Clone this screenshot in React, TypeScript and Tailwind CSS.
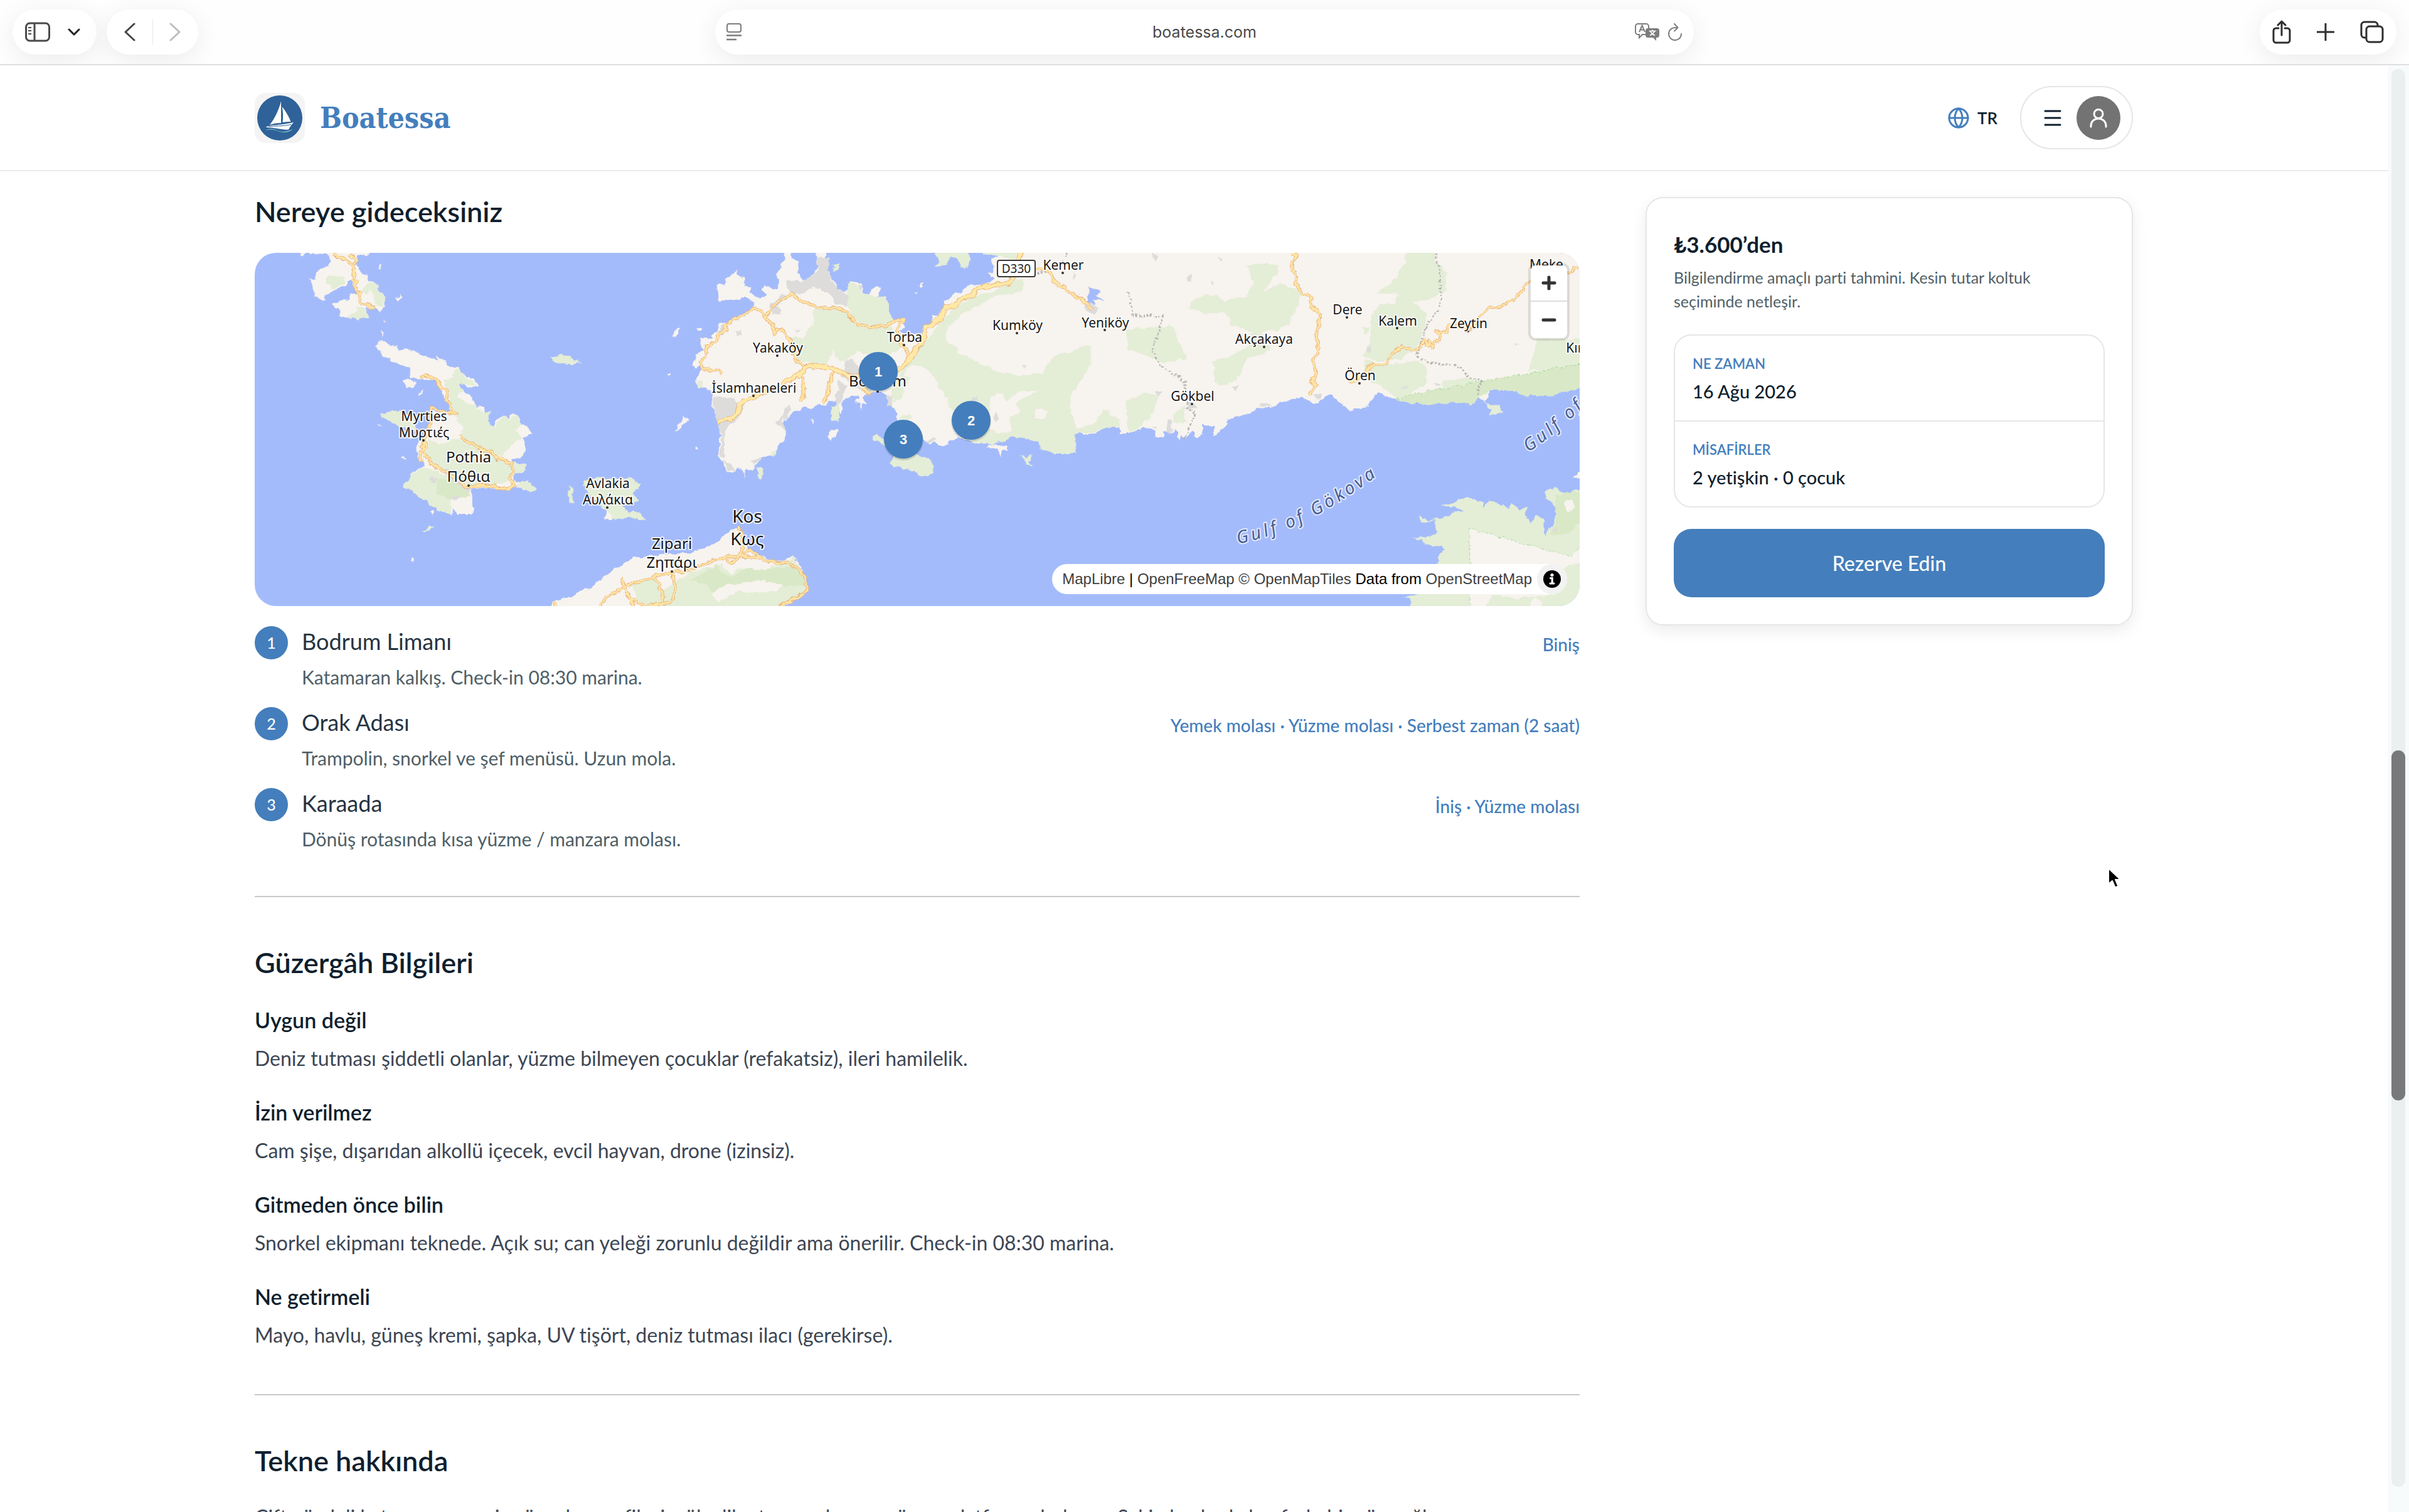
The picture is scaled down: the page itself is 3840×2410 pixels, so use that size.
import { Globe } from "lucide-react";

const stops = [
  { title: "Bodrum Limanı", text: "Katamaran kalkış. Check-in 08:30 marina.", tags: "Biniş" },
  { title: "Orak Adası", text: "Trampolin, snorkel ve şef menüsü. Uzun mola.", tags: "Yemek molası · Yüzme molası · Serbest zaman (2 saat)" },
  { title: "Karaada", text: "Dönüş rotasında kısa yüzme / manzara molası.", tags: "İniş · Yüzme molası" },
];

const infos = [
  { title: "Uygun değil", text: "Deniz tutması şiddetli olanlar, yüzme bilmeyen çocuklar (refakatsiz), ileri hamilelik." },
  { title: "İzin verilmez", text: "Cam şişe, dışarıdan alkollü içecek, evcil hayvan, drone (izinsiz)." },
  { title: "Gitmeden önce bilin", text: "Snorkel ekipmanı teknede. Açık su; can yeleği zorunlu değildir ama önerilir. Check-in 08:30 marina." },
  { title: "Ne getirmeli", text: "Mayo, havlu, güneş kremi, şapka, UV tişört, deniz tutması ilacı (gerekirse)." },
];

// Each map tile has its own 1568 unit grid
const west = {
  land: [
    "170,20 175,45 215,36 265,40 280,70 265,95 240,100 225,120 228,145 205,140 220,170 225,215 258,235 260,215 290,190 330,175 345,150 360,160 365,205 345,210 345,230 285,250 305,270 310,300 335,318 395,300 415,310 400,265 430,270 450,290 465,260 465,225 440,170 410,150 405,130 375,100 370,70 375,50 410,50 412,20",
    "460,400 480,420 505,430 515,450 540,440 575,450 600,470 650,490 645,470 680,490 685,510 720,525 750,555 790,585 792,605 750,600 735,580 725,590 740,620 780,660 785,685 810,690 812,710 835,710 830,760 845,775 850,740 880,720 895,735 915,712 935,730 940,760 960,765 980,805 945,815 955,860 940,905 905,905 910,920 957,935 950,960 920,965 915,1000 950,1010 960,995 990,1035 975,1050 925,1025 870,1040 830,1025 765,1035 770,1060 772,1143 720,1143 705,1120 700,1143 650,1125 590,1070 595,1040 530,1020 560,1000 560,970 600,940 605,925 580,900 578,860 600,820 620,760 625,700 700,715 680,660 655,600 640,575 590,570 555,560 555,520 530,515 460,470 437,430",
    "530,575 555,565 575,585 570,605 540,605",
    "445,85 458,90 450,102",
    "500,215 515,225 522,208 526,225 515,236 505,230",
    "580,632 600,615 602,626 585,640",
    "456,365 465,370 459,388",
    "465,318 475,326 466,327",
    "1466,388 1470,365 1490,354 1490,372 1476,390",
    "1474,798 1485,760 1500,750 1505,725 1520,740 1500,765",
    "1445,545 1460,545 1455,560",
    "556,1326 570,1326 563,1343",
    "624,1130 632,1123 640,1132 630,1143",
    "524,905 532,893 540,908",
    "440,760 457,762 450,766",
    "1240,1110 1230,1160 1250,1165 1262,1150",
    "1545,855 1551,868 1544,868",
  ],
  green: [
    "265,140 285,128 325,140 328,165 290,185 265,165",
    "385,185 420,160 440,170 467,225 460,262 435,250 430,215 415,190 400,215 385,200",
    "340,300 370,280 365,262 400,270 415,310 340,318",
    "447,720 480,708 520,705 570,740 575,780 555,830 550,790 500,760",
    "710,530 735,540 755,565 792,600 725,590 740,620 720,640 745,670 780,680 800,710 835,710 830,760 850,770 880,720 900,740 925,715 940,760 920,790 945,815 905,850 870,900 840,880 800,870 725,810 740,770 700,720 690,640 665,570 705,565",
    "620,820 650,850 720,820 800,870 860,910 910,930 900,1000 850,1020 760,1020 700,970 640,940 610,890",
    "560,975 605,940 660,970 740,1010 765,1040 760,1060 690,1080 700,1143 650,1125 590,1070 530,1020",
    "915,925 957,935 950,960 915,960",
    "925,1020 935,1005 950,1010 960,995 990,1035 975,1050",
    "1040,480 1080,465 1110,470 1130,490 1150,505 1100,505 1050,495",
    "596,1215 620,1192 643,1188 620,1208",
    "1106,1025 1120,1040 1116,1075 1124,1095 1108,1100 1104,1060",
    "1158,1000 1200,990 1320,990 1358,1020 1330,1055 1345,1085 1290,1105 1310,1130 1350,1135 1375,1168 1320,1155 1270,1168 1250,1140 1220,1110 1165,1045",
  ],
  reserve: ["650,985 720,1010 750,1030 765,1065 690,1078 650,1050"],
  urban: ["660,955 680,945 765,1040 755,1045 700,1000", "625,985 650,980 645,1010 625,1005", "695,1068 730,1066 715,1085 697,1082"],
  minor: [
    "285,38 300,50 330,60 345,80 360,90 355,150 372,155 362,190 380,210 382,245 405,252 430,270",
    "342,38 352,48 368,65 358,88",
    "590,562 605,555 645,570 658,600 680,620 685,665 715,718 660,700 630,690 625,760 605,810 597,860 610,900 650,950 680,960 755,1030 800,1018 850,1020 870,1040 920,1018 900,995 912,960 910,925 865,912 830,875 790,860 725,812",
    "605,810 608,860 590,885 590,912 602,912",
  ],
};

const centre = {
  land: [
    "325,10 335,60 320,80 312,110 300,125 310,150 308,185 295,190 262,170 250,195 270,215 240,225 205,200 215,180 200,180 190,180 190,140 165,130 160,105 150,135 125,145 125,175 95,165 100,240 140,230 180,235 195,215 220,240 220,265 195,290 160,310 130,330 100,335 95,370 75,385 80,395 40,395 38,420 50,450 25,460 25,490 10,505 20,520 35,505 40,530 30,545 22,575 25,610 50,610 78,625 80,680 90,720 100,750 110,800 105,830 100,900 120,920 125,955 150,968 170,945 190,955 195,985 198,950 220,960 235,930 250,900 285,895 300,870 330,830 340,790 325,775 330,740 360,710 400,685 430,690 450,675 475,680 480,655 510,665 515,690 525,720 530,700 530,665 560,635 580,640 590,650 570,670 590,665 595,700 600,675 615,675 605,650 610,635 640,625 665,625 690,645 690,680 720,710 720,745 760,780 800,800 820,830 830,850 850,840 900,850 905,830 930,810 985,840 1050,845 1030,860 1070,868 1080,905 1088,870 1110,865 1085,850 1050,845 1090,820 1140,810 1180,815 1215,840 1225,870 1260,885 1340,885 1325,850 1340,800 1380,805 1430,785 1470,770 1500,780 1520,800 1568,775 1600,775 1600,10 1100,10 1070,50 1050,60 1050,80 1060,100 1055,120 1035,125 1060,145 1020,170 995,165 965,175 945,200 910,215 885,235 880,260 865,300 840,300 845,330 815,340 805,375 760,380 730,370 745,350 745,320 715,320 695,290 685,225 650,220 665,180 650,170 620,215 605,200 600,165 560,155 550,190 540,205 515,190 505,160 485,130 485,90 475,60 475,10 445,10 440,60 450,90 430,125 400,150 375,120 380,80 360,60 350,10",
    "-479,1560 -479,1510 -414,1495 -344,1450 -259,1375 -194,1325 -124,1318 -24,1308 0,1305 45,1290 90,1260 140,1215 172,1195 185,1230 200,1285 250,1320 290,1338 330,1338 362,1318 380,1345 395,1385 412,1465 370,1495 300,1560",
    "28,355 40,348 45,360 36,366",
    "420,742 434,738 432,752",
    "480,815 490,785 512,780 510,800 495,828",
    "805,160 815,155 810,178 800,180",
    "778,205 795,190 785,212",
    "18,865 22,850 26,865",
  ],
  green: [
    "430,260 500,270 550,285 575,330 620,350 700,345 720,380 735,430 720,450 690,470 650,470 580,450 560,480 520,500 500,440 480,500 440,510 380,490 355,470 350,395 400,390 430,320",
    "555,160 575,170 600,200 640,220 685,225 695,290 715,320 660,345 600,340 570,310 545,260 548,200",
    "1120,140 1165,150 1150,200 1060,220 950,290 900,350 890,400 930,450 1000,500 1080,545 1170,555 1230,540 1260,470 1310,460 1390,420 1395,500 1370,560 1350,590 1325,640 1320,700 1345,780 1400,760 1440,700 1490,740 1568,690 1568,780 1470,770 1380,800 1340,800 1340,885 1260,885 1225,870 1215,840 1140,810 1050,845 985,840 950,800 930,780 910,700 890,650 870,610 850,560 800,510 760,520 740,560 720,520 760,490 790,430 830,400 860,340 910,280 990,215 1060,200",
    "1500,370 1530,355 1600,350 1600,450 1545,420",
    "705,895 740,870 800,890 835,910 850,940 840,970 800,985 780,955 740,950 700,930",
    "636,808 650,803 680,820 700,860 660,840 640,830",
    "1152,890 1165,900 1188,890 1190,915 1175,920 1192,942 1165,935",
    "850,10 865,65 850,95 880,90 900,70 905,50 930,60 940,95 970,95 975,60 960,10",
    "1010,10 1020,45 1080,45 1130,70 1145,10",
    "705,585 740,555 770,560 745,610 735,650 705,665",
    "495,690 510,680 520,700 520,750 490,745",
    "285,875 305,868 300,890 285,893",
    "235,940 255,945 255,985 245,990 235,970",
    "25,572 45,575 45,612 25,608",
    "500,85 525,80 515,105 500,120",
    "725,735 760,720 775,740 725,740",
    "0,1390 105,1355 150,1400 170,1370 250,1375 310,1355 345,1345 362,1320 375,1345 400,1420 412,1465 370,1490 310,1540 -120,1540 -150,1520 -94,1470 -40,1420",
    "-204,1440 -124,1412 -94,1490 -144,1528 -184,1500",
  ],
  clearing: [
    "1045,640 1070,625 1100,660 1140,620 1210,620 1160,650 1130,680 1150,700 1110,740 1120,790 1080,800 1040,780 1020,720 1045,700",
    "1200,700 1240,700 1230,740 1200,730",
    "75,1475 130,1440 260,1420 330,1440 300,1470 170,1470 100,1510",
  ],
  reserve: ["105,1355 105,1385 150,1410 175,1375 300,1370 370,1365 395,1400 405,1440 300,1450 190,1430 130,1480 80,1480 60,1440 0,1420"],
  urban: [
    "340,155 400,150 450,110 440,50 485,60 485,130 515,190 550,215 550,260 510,250 480,200 430,180 380,210 350,205 335,185",
    "275,260 320,210 340,215 310,260 320,290 290,300",
    "540,490 570,485 580,515 640,560 635,620 600,620 560,580 520,560 540,540",
    "80,640 140,650 190,670 170,740 135,760 120,820 122,900 105,900 112,800 90,720",
    "120,905 145,940 160,960 130,955",
    "520,570 545,600 535,650 515,690 508,665",
    "685,640 705,640 700,690 688,680",
    "210,915 240,900 250,905 225,935",
    "330,690 350,685 345,720 325,745 335,790 300,755 325,730",
    "160,365 175,362 182,385 168,388",
    "1370,255 1400,245 1420,270 1405,295 1375,285",
    "1052,730 1068,708 1078,735 1065,755",
    "980,645 1002,640 1000,665 980,660",
    "1155,512 1170,515 1165,525 1152,520",
    "820,830 850,818 855,832 825,842",
    "365,358 382,362 375,370",
    "110,345 130,345 120,380 95,380",
    "1332,118 1342,130 1335,152",
    "580,170 605,172 595,195",
  ],
  lake: ["1385,180 1420,195 1425,205 1410,215 1440,236 1405,228 1410,250 1380,248"],
  minor: [
    "115,550 100,530 45,528 38,500 55,470 60,430 90,410 105,375 130,360 125,345 150,320 185,300 225,270 245,280 265,305 290,270 310,240 355,205 385,235 440,268 520,268 545,285 580,335 620,350 680,345 710,322 742,320 720,365 735,420 765,465",
    "265,305 290,340 295,380 305,358 320,358 350,400 358,460 375,495 405,518",
    "390,555 400,640 387,668",
    "502,540 480,600 478,630 465,668",
    "600,610 615,625 630,628",
    "1200,103 1245,108 1280,175 1300,180 1345,222 1365,225 1370,245 1385,255 1397,280",
    "168,1195 185,1230 178,1315",
    "-309,1531 -289,1495 -224,1450 -124,1405 -59,1388 0,1380 60,1345 140,1320 240,1325 270,1340 340,1350 375,1370 400,1405 412,1465 370,1495 310,1535",
    "125,1330 143,1352 180,1320 200,1295 215,1295 250,1325",
    "-239,1408 -214,1480 -194,1531",
    "-124,1405 -94,1470 -89,1520",
    "-59,1388 -49,1450 -54,1500 -84,1520 -154,1531 -204,1500 -224,1455",
    "-474,1510 -464,1535",
  ],
  major: [
    "1150,20 1135,110 1110,165 1060,170 1000,185 980,215 945,230 920,260 885,265 880,295 850,335 820,345 815,400 770,470 745,515 720,530 640,560 550,555 490,520 440,512 405,520 370,560 330,580 320,610 265,620 220,650 180,665 165,720 100,752",
  ],
  border: ["1512,36 1505,90 1520,180 1540,300 1570,300", "1310,36 1305,60 1290,80", "1208,120 1245,115"],
};

const east = {
  land: [
    "-30,800 0,800 40,775 75,775 90,790 90,815 115,815 115,795 150,795 155,780 170,800 170,830 180,810 190,825 195,800 200,820 215,790 235,820 250,800 250,760 290,770 290,810 320,780 340,740 360,725 400,725 430,695 480,690 530,660 580,647 620,670 645,665 665,640 690,640 720,675 743,705 810,685 828,635 845,630 900,655 950,670 1010,678 1100,665 1155,680 1185,650 1200,670 1220,680 1250,680 1265,710 1220,722 1225,700 1195,665 1215,645 1220,618 1300,618 1350,640 1420,645 1480,620 1560,590 1560,10 -30,10",
    "1500,990 1524,962 1560,970 1560,990",
  ],
  green: [
    "400,85 500,85 505,110 455,200 510,165 590,200 545,330 510,360 450,370 480,450 400,480 370,560 330,600 290,585 285,490 350,470 400,430 420,370 345,335 330,290 250,290 200,265 230,220 300,210 320,240 400,215 420,160",
    "945,10 1035,10 1035,60 1075,120 1070,190 1020,230 960,240 1010,300 985,400 970,450 900,490 820,490 790,470 815,420 820,300 850,250 900,250 910,210 835,205 900,150 930,80",
    "800,490 870,510 980,490 1010,520 1000,600 930,640 905,655 870,610 820,580 800,540",
    "790,350 815,350 800,380",
    "1380,400 1560,400 1560,510 1350,535 1370,450",
    "1060,580 1150,565 1180,585 1060,620",
    "-10,360 150,345 195,480 120,500 0,440",
    "-10,665 60,625 100,640 80,720 40,770 0,795",
    "150,720 190,680 195,750 150,750",
    "1185,650 1200,670 1220,680 1250,680 1265,710 1220,722 1225,700",
    "960,1560 950,1500 930,1495 975,1480 1000,1400 1050,1345 1040,1330 1050,1310 1068,1290 1060,1280 1005,1275 985,1250 960,1243 1020,1240 1045,1220 1035,1195 1035,1165 990,1175 980,1150 1015,1165 1060,1160 1100,1130 1135,1130 1110,1115 1050,1103 1100,1095 1140,1070 1195,1085 1200,1120 1215,1080 1260,1100 1285,1120 1290,1090 1320,1120 1345,1110 1340,1150 1360,1180 1375,1145 1400,1160 1405,1240 1440,1180 1440,1110 1400,1055 1440,1025 1480,1060 1510,1040 1560,1040 1560,1560",
  ],
  reserve: [
    "905,655 940,637 1560,497 1560,590 1480,620 1420,645 1350,640 1300,618 1220,618 1185,650 1155,680 1100,665 1010,678 950,670",
    "1440,1060 1560,1040 1560,1190 1520,1180 1490,1220 1420,1230 1445,1180",
  ],
  clearing: [
    "1152,1203 1492,1320 1560,1250 1560,1330 1470,1370 1440,1480 1300,1500 1225,1480 1220,1510 1180,1560 1152,1560",
    "1350,1540 1370,1490 1400,1520 1400,1540",
    "1470,1090 1500,1075 1510,1120 1480,1130",
  ],
  urban: [
    "195,130 215,122 215,150 200,160",
    "78,36 100,45 90,72",
    "300,45 318,60 312,72",
    "345,600 375,595 365,620",
    "85,620 118,620 100,645",
    "195,670 225,670 230,695 205,695",
    "625,635 650,630 648,655 632,655",
    "440,685 450,668 470,670 485,685",
    "125,795 130,740 145,745 145,795",
    "805,435 820,432 815,455 803,450",
    "920,605 945,600 940,615",
    "1030,585 1055,590 1045,602",
    "1302,418 1322,420 1310,428",
    "1425,1208 1445,1205 1440,1218",
    "280,160 292,165 284,172",
    "80,770 95,772 93,785",
  ],
  minor: [
    "555,36 565,50 550,100 567,130 567,175 590,205 615,220 620,265 648,295 640,350 635,400 640,455 625,485 632,550 620,580 632,600 615,622 617,635",
    "745,585 800,550 820,508 868,508 890,460 925,432 965,447 990,435 1000,405 1010,425 1015,405 1025,435 1035,410 1050,408 1055,385 1042,368 1075,372 1080,340 1160,355 1190,300 1215,265 1255,265 1310,220 1350,160 1400,140 1480,120 1500,112 1505,95 1530,95",
  ],
  border: [
    "0,200 15,300 115,302 110,340 78,450 105,510 190,580 197,690 225,715 205,770 190,825",
    "1035,40 1050,100 1057,240 1040,290 1010,330 990,400 975,475 1020,500 1120,515 1150,565 1195,580 1180,610 1182,645",
  ],
  park: ["905,655 940,637 1560,497", "1152,1560 1152,1203 1492,1320 1560,1240"],
};

type TileShapes = {
  land: string[];
  green?: string[];
  reserve?: string[];
  clearing?: string[];
  urban?: string[];
  lake?: string[];
  minor?: string[];
  major?: string[];
  border?: string[];
  park?: string[];
};

const Fill = ({ shapes = [], color }: { shapes?: string[]; color: string }) => (
  <>
    {shapes.map((points) => (
      <polygon key={points} points={points} fill={color} />
    ))}
  </>
);

const Line = ({ shapes = [], color, width, dash }: { shapes?: string[]; color: string; width: number; dash?: string }) => (
  <>
    {shapes.map((points) => (
      <polyline
        key={points}
        points={points}
        fill="none"
        stroke={color}
        strokeWidth={width}
        strokeDasharray={dash}
        strokeLinejoin="round"
        vectorEffect="non-scaling-stroke"
      />
    ))}
  </>
);

const Tile = ({ x, width, shapes }: { x: number; width: number; shapes: TileShapes }) => (
  <svg x={x} y={-13} width={width} height={590} viewBox="0 0 1568 1568" preserveAspectRatio="none" overflow="visible">
    <Fill shapes={shapes.land} color="#f7f3ee" />
    <Fill shapes={shapes.green} color="#e4edd6" />
    <Fill shapes={shapes.reserve} color="#d9e8c6" />
    <Fill shapes={shapes.clearing} color="#f7f3ee" />
    <Fill shapes={shapes.urban} color="#dddcdb" />
    <Fill shapes={shapes.lake} color="#a4bbfb" />
    <Line shapes={shapes.park} color="#a3dc9d" width={1} dash="4 3" />
    <Line shapes={shapes.border} color="#b5b3b3" width={3} dash="3 3" />
    <Line shapes={shapes.minor} color="#e9b27c" width={5} />
    <Line shapes={shapes.minor} color="#ffe6a3" width={3} />
    <Line shapes={shapes.major} color="#e9b27c" width={8} />
    <Line shapes={shapes.major} color="#ffe9a5" width={6} />
  </svg>
);

// [name, x, baseline, size]
const labels: [string, number, number, number][] = [
  ["Myrties", 270, 268, 21],
  ["Μυρτιές", 270, 294, 21],
  ["Pothia", 341, 334, 24],
  ["Πόθια", 341, 365, 24],
  ["Avlakia", 563, 375, 21],
  ["Αυλάκια", 563, 401, 21],
  ["Zipari", 665, 472, 24],
  ["Ζηπάρι", 665, 502, 24],
  ["Kos", 785, 430, 28],
  ["Κως", 785, 466, 28],
  ["Yakaköy", 834, 159, 21],
  ["Torba", 1036, 142, 21],
  ["Bodrum", 993, 213, 24],
  ["İslamhaneleri", 796, 223, 21],
  ["Kemer", 1289, 27, 21],
  ["Kumköy", 1216, 123, 21],
  ["Yeniköy", 1356, 119, 21],
  ["Akçakaya", 1609, 145, 21],
  ["Gökbel", 1495, 236, 21],
  ["Dere", 1742, 98, 21],
  ["Kalem", 1822, 116, 21],
  ["Zeytin", 1935, 120, 21],
  ["Ören", 1762, 203, 21],
  ["Meke", 2059, 26, 21],
  ["Kıran", 2116, 159, 21],
];

const dots: [number, number][] = [
  [269, 299], [341, 371], [562, 406], [665, 508], [833, 164], [1035, 147], [993, 221], [795, 228], [1288, 32], [1215, 128],
  [1355, 123], [1609, 150], [1494, 241], [1741, 103], [1821, 120], [1934, 125], [1761, 208], [1133, 295],
];

const pins = [
  { n: 1, x: 994, y: 189 },
  { n: 2, x: 1142, y: 267 },
  { n: 3, x: 1034, y: 297 },
];

const RouteMap = () => (
  <div className="relative overflow-hidden rounded-[34px] bg-[#a4bbfb]">
    <svg viewBox="0 0 2112 563" className="block w-full font-['Noto_Sans',sans-serif]">
      <defs>
        <filter id="coast" x="0" y="0" width="2112" height="563" filterUnits="userSpaceOnUse">
          <feTurbulence type="fractalNoise" baseFrequency="0.09" numOctaves="3" seed="4" result="noise" />
          <feDisplacementMap in="SourceGraphic" in2="noise" scale="9" xChannelSelector="R" yChannelSelector="G" />
        </filter>
        <path id="gulf-a" d="M1567 464 C1660 445 1722 406 1830 326" />
        <path id="gulf-b" d="M2030 318 C2070 292 2095 268 2150 215" />
      </defs>
      <g filter="url(#coast)">
        <Tile x={-7} width={720} shapes={west} />
        <Tile x={693} width={720} shapes={centre} />
        <Tile x={1393} width={740} shapes={east} />
      </g>
      <rect x="1184" y="12" width="60" height="26" rx="3" fill="#fff" stroke="#3a3a3a" strokeWidth="2" />
      <text x="1214" y="32" textAnchor="middle" fontSize="19" fill="#222">D330</text>
      {dots.map(([x, y]) => (
        <circle key={x} cx={x} cy={y} r="2" fill="#333" />
      ))}
      <g textAnchor="middle" fill="#161616" stroke="#ffffff" strokeOpacity="0.8" strokeWidth="4" strokeLinejoin="round" paintOrder="stroke">
        {labels.map(([name, x, y, size]) => (
          <text key={name} x={x} y={y} fontSize={size}>{name}</text>
        ))}
      </g>
      <g fontSize="28" fontStyle="italic" fill="#495e91" stroke="#ffffff" strokeOpacity="0.7" strokeWidth="4" strokeLinejoin="round" paintOrder="stroke" className="tracking-[5px]">
        <text><textPath href="#gulf-a">Gulf of Gökova</textPath></text>
        <text><textPath href="#gulf-b">Gulf of</textPath></text>
      </g>
      <g className="font-['Liberation_Sans',sans-serif]">
        {pins.map((pin) => (
          <g key={pin.n}>
            <circle cx={pin.x} cy={pin.y + 2} r="32" fill="#000" opacity="0.12" />
            <circle cx={pin.x} cy={pin.y} r="31" fill="#447ebc" />
            <text x={pin.x} y={pin.y + 8} textAnchor="middle" fontSize="22" fontWeight="700" fill="#fff">{pin.n}</text>
          </g>
        ))}
      </g>
    </svg>

    <div className="absolute right-5 top-5 w-[58px] rounded-lg bg-white shadow-[0_0_0_4px_rgba(0,0,0,0.1)]">
      <button aria-label="Yakınlaştır" className="flex h-[58px] w-full items-center justify-center border-b-2 border-[#ddd]">
        <svg viewBox="0 0 24 24" className="h-6 w-6" stroke="#333" strokeWidth="5" strokeLinecap="round">
          <path d="M12 3v18M3 12h18" />
        </svg>
      </button>
      <button aria-label="Uzaklaştır" className="flex h-[58px] w-full items-center justify-center">
        <svg viewBox="0 0 24 24" className="h-6 w-6" stroke="#333" strokeWidth="5" strokeLinecap="round">
          <path d="M3 12h18" />
        </svg>
      </button>
    </div>

    <div className="absolute bottom-[19px] right-5 flex h-12 items-center gap-2 rounded-full bg-white pl-4 font-['Liberation_Sans',Arial,sans-serif] text-[24px] leading-[40px] text-black">
      <span className="whitespace-nowrap">
        <a href="#" className="text-[#404040]">MapLibre</a> | <a href="#" className="text-[#404040]">OpenFreeMap</a>{" "}
        <a href="#" className="text-[#404040]">© OpenMapTiles</a> Data from <a href="#" className="text-[#404040]">OpenStreetMap</a>
      </span>
      <button aria-label="Atıf" className="flex h-12 w-12 items-center justify-center rounded-full bg-[#f2f2f2]">
        <svg viewBox="0 0 28 28" className="h-7 w-7">
          <circle cx="14" cy="14" r="14" fill="#000" />
          <circle cx="14" cy="7.5" r="2.6" fill="#fff" />
          <path d="M11.500 12.500h2.700v8M11 21h6" stroke="#fff" strokeWidth="3.2" strokeLinecap="round" fill="none" />
        </svg>
      </button>
    </div>
  </div>
);

const BrowserBar = () => (
  <div className="grid h-[104px] shrink-0 grid-cols-[1fr_1560px_1fr] items-center overflow-hidden border-b-2 border-[#dfdfdf] bg-[#fefefe] px-5">
    <div className="flex gap-4">
      <div className="flex h-[72px] w-[134px] items-center rounded-full bg-white pl-5 shadow-[0_8px_40px_rgba(0,0,0,0.08)]">
        <button aria-label="Kenar çubuğu">
          <svg viewBox="0 0 40 32" className="h-8 w-10" fill="none" stroke="#4a4a4a" strokeWidth="3">
            <rect x="1.5" y="2" width="37" height="28" rx="6" />
            <path d="M15 2v28" />
            <path d="M5 9h5M5 14h5M5 19h5" strokeWidth="2" />
          </svg>
        </button>
        <button aria-label="Sekme grupları" className="ml-7">
          <svg viewBox="0 0 20 12" className="h-3 w-5" fill="none" stroke="#222" strokeWidth="3" strokeLinecap="round" strokeLinejoin="round">
            <path d="M2 2l8 8 8-8" />
          </svg>
        </button>
      </div>
      <div className="flex h-[72px] w-[146px] items-center justify-between rounded-full bg-white px-7 shadow-[0_8px_40px_rgba(0,0,0,0.08)]">
        <button aria-label="Geri">
          <svg viewBox="0 0 18 30" className="h-[30px] w-[18px]" fill="none" stroke="#444" strokeWidth="3" strokeLinecap="round" strokeLinejoin="round">
            <path d="M16 2L2 15l14 13" />
          </svg>
        </button>
        <span className="h-10 w-px bg-[#e6e6e6]" />
        <button aria-label="İleri">
          <svg viewBox="0 0 18 30" className="h-[30px] w-[18px]" fill="none" stroke="#bdbdbd" strokeWidth="3" strokeLinecap="round" strokeLinejoin="round">
            <path d="M2 2l14 13L2 28" />
          </svg>
        </button>
      </div>
    </div>

    <div className="flex h-[72px] items-center rounded-full bg-white px-[18px] shadow-[0_8px_40px_rgba(0,0,0,0.08)]">
      <svg viewBox="0 0 24 28" className="h-7 w-6 shrink-0" fill="none" stroke="#7d7d7d" strokeWidth="2">
        <rect x="1" y="1" width="22" height="13" rx="3" />
        <path d="M0 19.500h24M0 26h16" strokeWidth="2.500" />
      </svg>
      <input
        aria-label="Adres"
        defaultValue="boatessa.com"
        className="ml-8 w-full min-w-0 bg-transparent pl-5 text-center font-['Inter',sans-serif] text-[25px] leading-[40px] text-[#4a4a4a] outline-none"
      />
      <button aria-label="Çevir">
        <svg viewBox="0 0 40 28" className="h-7 w-10" fill="none">
          <path d="M17 18H12l-5 5v-5H5a4 4 0 0 1-4-4V5a4 4 0 0 1 4-4h13a4 4 0 0 1 4 4v3" stroke="#7d7d7d" strokeWidth="2" />
          <path d="M7 14l4.500-10.500L16 14M8.500 10.500h6" stroke="#7d7d7d" strokeWidth="2" />
          <path d="M21 8h14a4 4 0 0 1 4 4v7a4 4 0 0 1-4 4h-1v5l-5-5h-8a4 4 0 0 1-4-4v-7a4 4 0 0 1 4-4z" fill="#7d7d7d" />
          <path d="M22.500 12.500h11M28 10.500v2M25 13c1 3 4 5 7 6.500M31 13c-1 3-4 5-7 6.500" stroke="#fff" strokeWidth="1.700" />
        </svg>
      </button>
      <button aria-label="Yenile" className="ml-3">
        <svg viewBox="0 0 24 30" className="h-[30px] w-6" fill="none" stroke="#7d7d7d" strokeWidth="2" strokeLinecap="round" strokeLinejoin="round">
          <path d="M15 8.500A10 10 0 1 0 22 18" />
          <path d="M11 2l5.500 6-5.500 5.500" />
        </svg>
      </button>
    </div>

    <div className="flex justify-end">
      <div className="flex h-[72px] w-[218px] items-center justify-between rounded-full bg-white px-5 text-[#2e2e2e] shadow-[0_8px_40px_rgba(0,0,0,0.08)]">
        <button aria-label="Paylaş">
          <svg viewBox="0 0 30 38" className="h-[38px] w-[30px]" fill="none" stroke="currentColor" strokeWidth="3" strokeLinecap="round" strokeLinejoin="round">
            <path d="M10 13H6a4 4 0 0 0-4 4v15a4 4 0 0 0 4 4h18a4 4 0 0 0 4-4V17a4 4 0 0 0-4-4h-4M15 24V2M9 8l6-6 6 6" />
          </svg>
        </button>
        <button aria-label="Yeni sekme">
          <svg viewBox="0 0 28 28" className="h-7 w-7" stroke="currentColor" strokeWidth="3" strokeLinecap="round">
            <path d="M14 1v26M1 14h26" />
          </svg>
        </button>
        <button aria-label="Sekmeler">
          <svg viewBox="0 0 38 36" className="h-9 w-[38px]" fill="none" stroke="currentColor" strokeWidth="3">
            <rect x="10" y="9" width="26" height="25" rx="5" />
            <path d="M10 27H7a5 5 0 0 1-5-5V7a5 5 0 0 1 5-5h16a5 5 0 0 1 5 5v2" />
          </svg>
        </button>
      </div>
    </div>
  </div>
);

const Logo = () => (
  <svg viewBox="0 0 80 80" className="h-20 w-20">
    <rect width="80" height="80" rx="18" fill="#f4f4f4" />
    <circle cx="40" cy="40" r="36" fill="#2f6299" />
    <path d="M42 13C39 26 32 41 24 51c5-2 11-3 18-3z" fill="#fff" />
    <path d="M43.500 22c6 7 11 16 14 24-5 0-8 0-13 1 1-8 1-16-1-25z" fill="#fff" />
    <path d="M17.500 55c6-5 20-2 44.500-8-4 4-6 8-8 11.500-11 1-24-4-36.500-3.500z" fill="#fff" />
    <path d="M22 53.500c12-1 24 0 36-3" stroke="#2f6299" strokeWidth="1" fill="none" />
    <path d="M17 60c10-7 18 1 27 2 6 0 11-2 17-4-6 5-14 6-21 4-8-3-14-5-23-2z" fill="#86c5c2" />
  </svg>
);

const SiteHeader = () => (
  <header className="border-b-2 border-[#ebebeb] bg-white">
    <div className="mx-auto flex h-[167px] w-full max-w-[2994px] items-center justify-between">
      <a href="#" className="flex items-center gap-6">
        <Logo />
        <span className="font-['DejaVu_Serif_Condensed','DejaVu_Serif',serif] text-[46px] font-bold leading-[60px] text-[#447ebc]">Boatessa</span>
      </a>
      <div className="flex items-center gap-9">
        <button className="flex items-center gap-3 text-[26px] font-semibold leading-[36px]">
          <Globe className="h-9 w-9 text-[#447ebc]" strokeWidth={2} />
          TR
        </button>
        <button aria-label="Menü" className="flex h-[101px] w-[180px] items-center justify-between rounded-full border-2 border-[#e6e6e6] pl-9 pr-[18px]">
          <svg viewBox="0 0 28 26" className="h-[26px] w-7" stroke="#0f1f2e" strokeWidth="3" strokeLinecap="round">
            <path d="M2 2h24M2 13h24M2 24h24" />
          </svg>
          <span className="flex h-[70px] w-[70px] items-center justify-center rounded-full bg-[#737373]">
            <svg viewBox="0 0 28 32" className="h-8 w-7" fill="none" stroke="#fff" strokeWidth="3" strokeLinecap="round">
              <circle cx="14" cy="9.500" r="7" />
              <path d="M2 30v-2a12 11 0 0 1 24 0v2" />
            </svg>
          </span>
        </button>
      </div>
    </div>
  </header>
);

const BookingCard = () => (
  <aside className="mt-[3px] w-[777px] shrink-0 rounded-[28px] border-2 border-[#e5e6e7] bg-white p-[43px] shadow-[0_8px_24px_rgba(0,0,0,0.08)]">
    <p className="text-[35px] font-bold leading-[60px]">₺3.600’den</p>
    <p className="mt-1 pr-10 text-[25px] leading-[38px] text-[#4f5f67]">Bilgilendirme amaçlı parti tahmini. Kesin tutar koltuk seçiminde netleşir.</p>
    <div className="mt-[34px] rounded-[28px] border-2 border-[#e5e6e7]">
      <button className="block w-full border-b-2 border-[#e5e6e7] px-7 pb-6 pt-[29px] text-left">
        <span className="block text-[22px] font-semibold leading-[32px] text-[#447ebc]">NE ZAMAN</span>
        <span className="mt-[6px] block text-[29px] font-medium leading-[44px]">16 Ağu 2026</span>
      </button>
      <button className="block w-full px-7 pb-6 pt-[29px] text-left">
        <span className="block text-[22px] font-semibold leading-[32px] text-[#447ebc]">MİSAFİRLER</span>
        <span className="mt-[6px] block text-[29px] font-medium leading-[44px]">2 yetişkin · 0 çocuk</span>
      </button>
    </div>
    <button className="mt-[34px] h-[109px] w-full rounded-[28px] bg-[#447ebc] text-[32px] font-medium leading-[44px] text-white">Rezerve Edin</button>
  </aside>
);

const App = () => {
  return (
    <div className="flex h-screen flex-col overflow-hidden bg-white font-['Lato',sans-serif] text-[#0f1f2e] [font-variant-ligatures:none]">
      <BrowserBar />
      <div className="flex min-h-0 flex-1">
        <div className="min-w-0 flex-1 overflow-hidden">
          <SiteHeader />
          <div className="mx-auto flex w-full max-w-[2994px] items-start gap-[105px] pt-[38px]">
            <main className="min-w-0 flex-1">
              <section className="border-b-2 border-[#c6c8ca] pb-[71px]">
                <h2 className="text-[45px] font-semibold leading-[52px]">Nereye gideceksiniz</h2>
                <div className="mt-10">
                  <RouteMap />
                </div>
                <ol className="mt-8 flex flex-col gap-7">
                  {stops.map((stop, i) => (
                    <li key={stop.title} className="flex gap-[22px]">
                      <span className="flex h-[53px] w-[53px] shrink-0 items-center justify-center rounded-full bg-[#447ebc] text-[25px] font-medium text-white">{i + 1}</span>
                      <div className="flex-1">
                        <div className="flex h-[53px] items-start justify-between">
                          <h3 className="text-[36px] leading-[49px] text-[#263442]">{stop.title}</h3>
                          <span className="pt-[11px] text-[28px] font-medium leading-[36px] text-[#447ebc]">{stop.tags}</span>
                        </div>
                        <p className="mt-2 text-[30px] leading-[40px] text-[#4f5f67]">{stop.text}</p>
                      </div>
                    </li>
                  ))}
                </ol>
              </section>

              <section className="border-b-2 border-[#c6c8ca] pb-[68px] pt-[78px]">
                <h2 className="text-[45px] font-semibold leading-[52px]">Güzergâh Bilgileri</h2>
                <div className="mt-11 flex flex-col gap-[38px]">
                  {infos.map((info) => (
                    <div key={info.title}>
                      <h3 className="text-[34px] font-semibold leading-[44px]">{info.title}</h3>
                      <p className="mt-[13px] text-[32px] leading-[52px] text-[#3c4654]">{info.text}</p>
                    </div>
                  ))}
                </div>
              </section>

              <section className="pt-[78px]">
                <h2 className="text-[45px] font-semibold leading-[52px]">Tekne hakkında</h2>
                <p className="mt-[38px] text-[32px] leading-[52px] text-[#3c4654]">
                  Çift gövdeli katamaran; geniş güneşlenme filesi, gölgelik oturma alanı ve yüzme platformu bulunur. Sakin koylarda konforlu bir gün sağlar.
                </p>
              </section>
            </main>
            <BookingCard />
          </div>
        </div>

        <div className="w-[34px] shrink-0 bg-[#f8fbfb] pb-10 pl-[6px] pt-[6px]">
          <div className="flex h-full w-[22px] flex-col rounded-full bg-[#ebefef]">
            <div className="mt-[1086px] h-[558px] rounded-full bg-[#78797b]" />
          </div>
        </div>
      </div>

      <svg viewBox="0 0 24 38" className="absolute left-[3359px] top-[1381px] h-[38px] w-6">
        <path d="M2 3v25l6-5 4.500 10.500 5-2-4.500-10.500h8z" fill="#000" stroke="#fff" strokeWidth="2" strokeLinejoin="round" />
      </svg>
    </div>
  );
};

export default App;
